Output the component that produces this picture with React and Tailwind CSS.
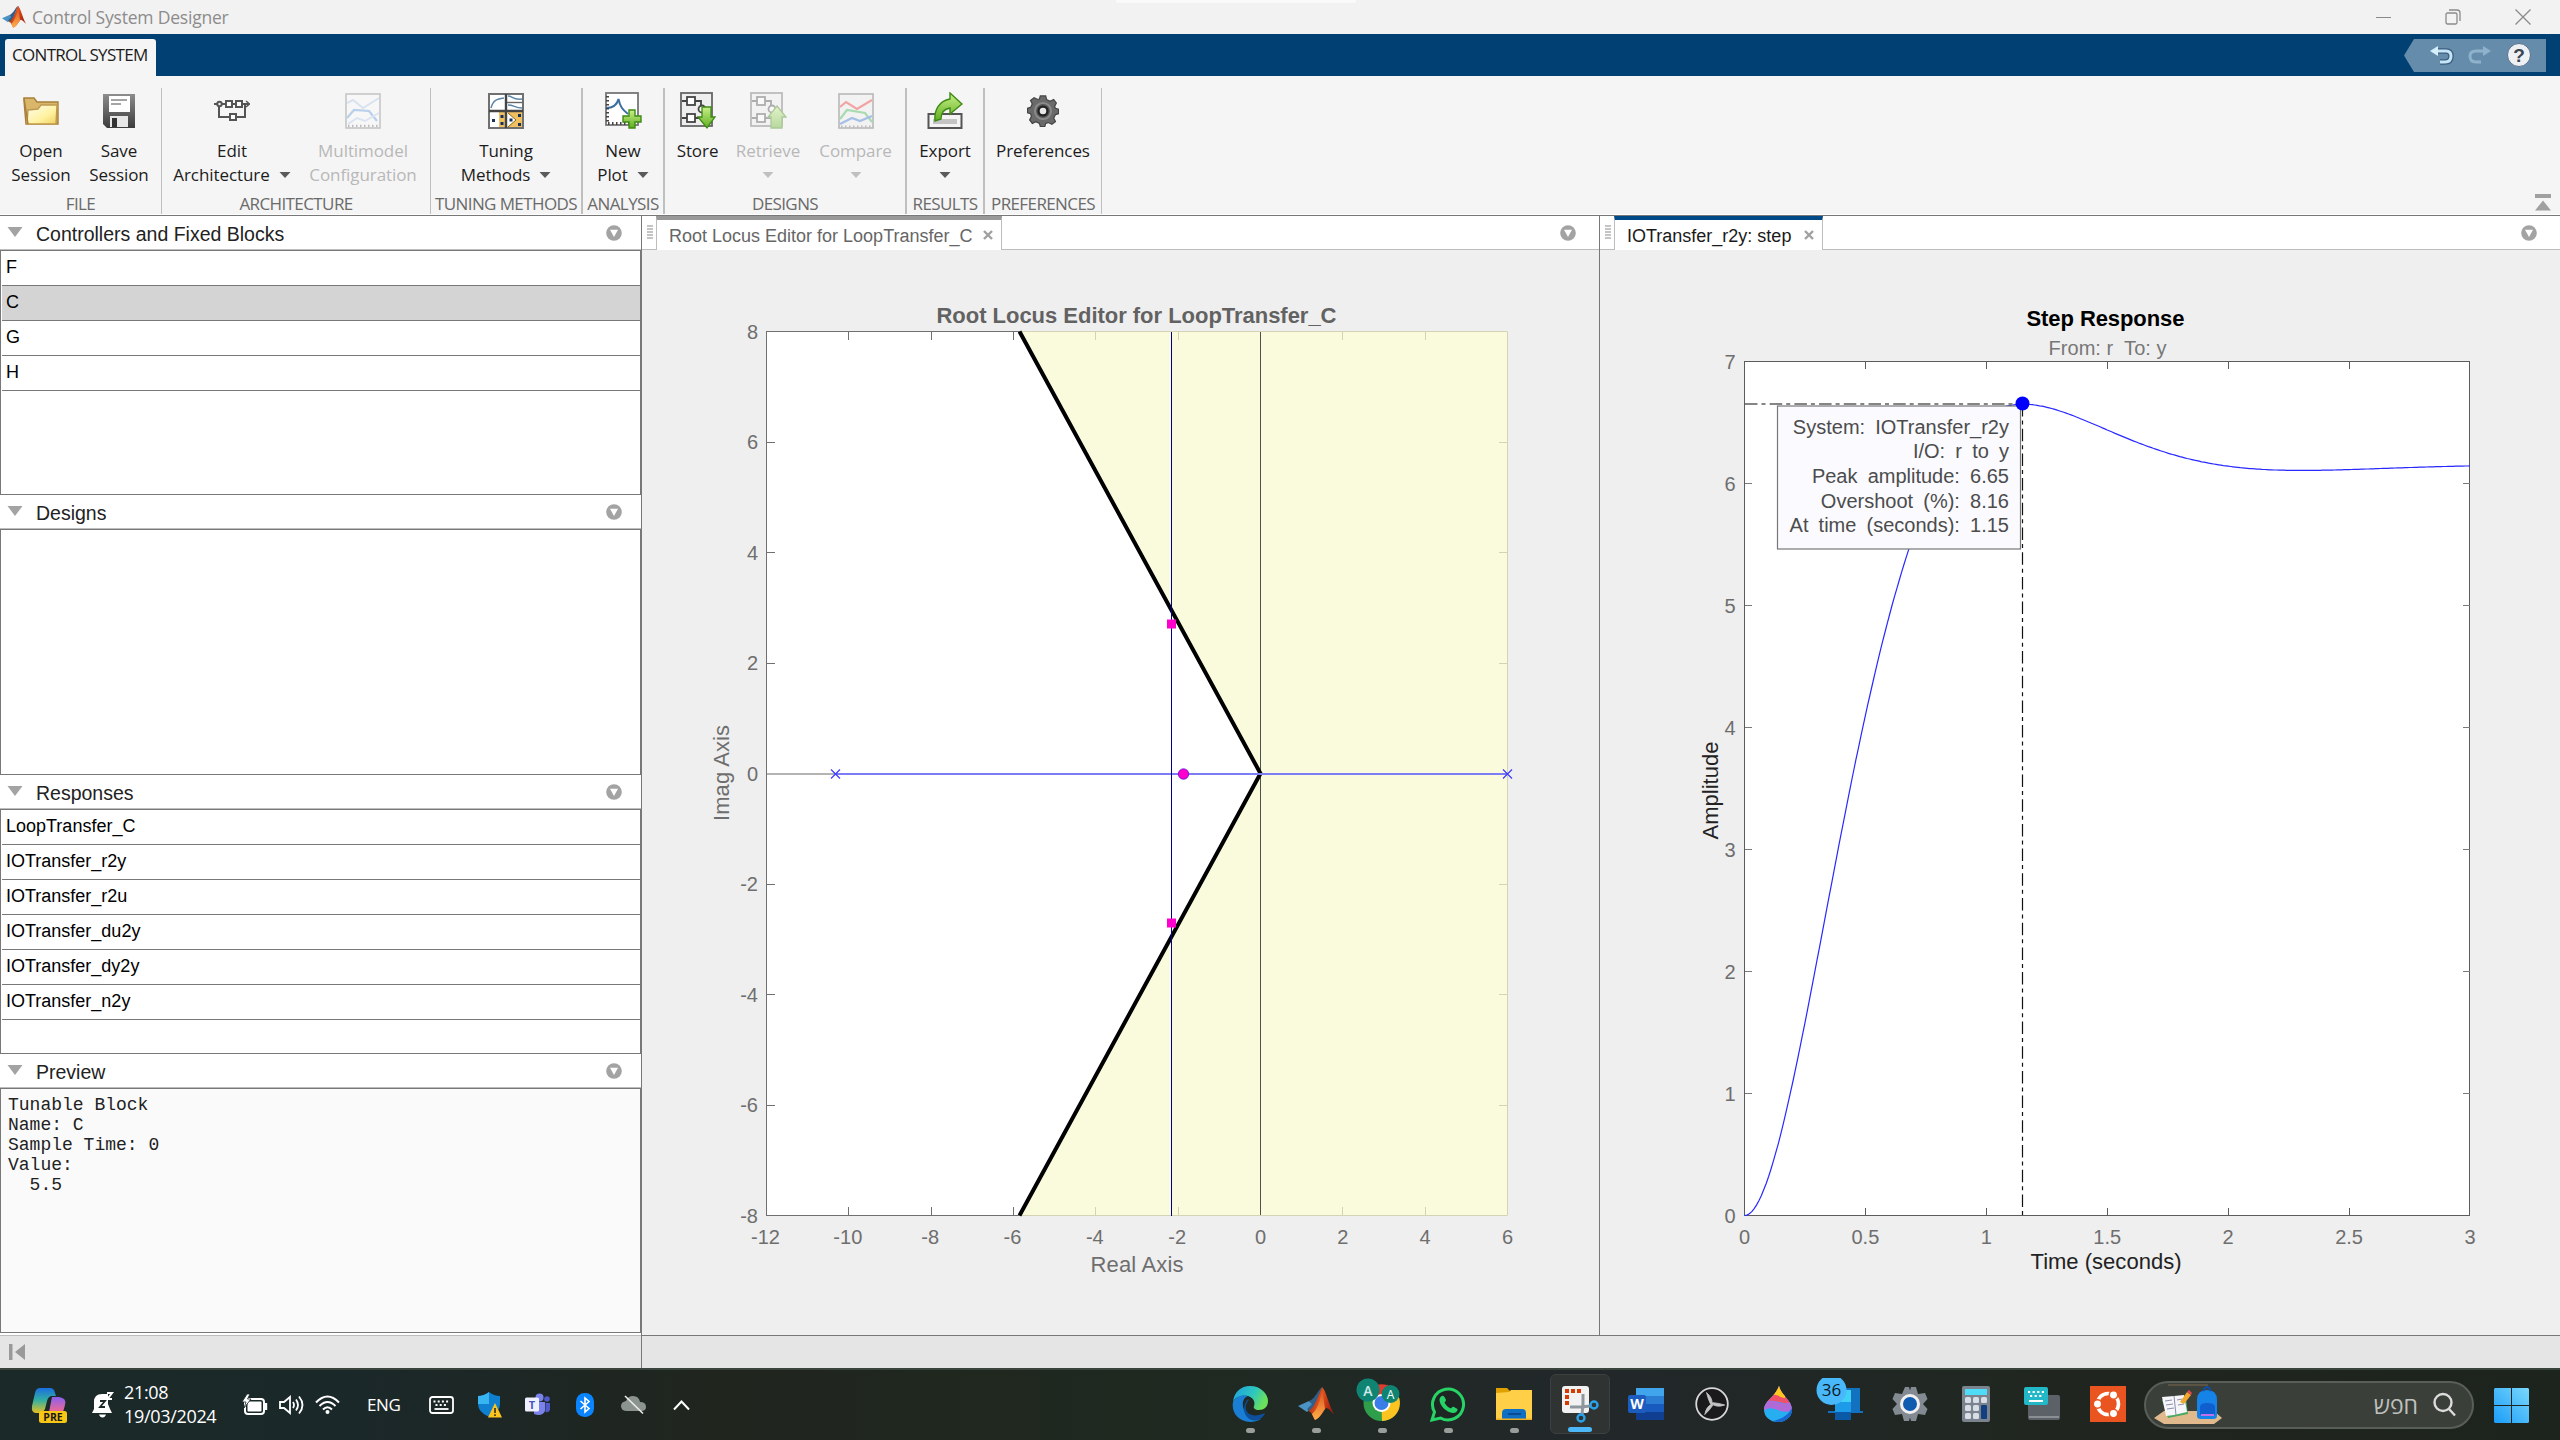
import React from "react";

/* ---------- shared bits ---------- */

const Caret = ({ dim }) => (
  <svg width="12" height="8" viewBox="0 0 12 8" className="shrink-0">
    <path d="M0.5 1H11.5L6 7Z" fill={dim ? "#c0c0c0" : "#5a5a5a"} />
  </svg>
);

const PanelMenu = () => (
  <svg width="16" height="16" viewBox="0 0 16 16" className="shrink-0">
    <circle cx="8" cy="8" r="7.8" fill="#a3a3a3" />
    <path d="M4 4.8H12L8 12Z" fill="#fff" />
  </svg>
);

const Grip = () => (
  <svg width="6" height="15" viewBox="0 0 6 15" className="shrink-0">
    {[0, 3, 6, 9, 12].map((y) => (
      <rect key={y} x="0" y={y} width="6" height="2" fill="#c4c4c4" />
    ))}
  </svg>
);

const CloseX = () => (
  <svg width="10" height="10" viewBox="0 0 10 10" className="shrink-0">
    <path d="M1 1L9 9M9 1L1 9" stroke="#a0a0a0" strokeWidth="2.4" />
  </svg>
);

const MatlabLogo = ({ size }) => (
  <svg width={size} height={size} viewBox="0 0 36 36">
    <defs>
      <linearGradient id="mlRed" x1="0" y1="0" x2="1" y2="0.4">
        <stop offset="0" stopColor="#7a1f12" />
        <stop offset="0.55" stopColor="#e2521d" />
        <stop offset="1" stopColor="#a3200f" />
      </linearGradient>
      <linearGradient id="mlOr" x1="0" y1="0" x2="0" y2="1">
        <stop offset="0" stopColor="#d84a1b" />
        <stop offset="1" stopColor="#ffb04a" />
      </linearGradient>
    </defs>
    <path d="M0 20L11 15L16 19L9 26Z" fill="#4b93c4" />
    <path d="M11 15C17 13 20 4 24 1L17 20L12 26L9 23L14 18Z" fill="#2f5f8a" />
    <path d="M24 1C20 10 17 22 10 25C14 25 15 32 17 34C22 32 25 25 28 22C31 22 33 26 36 28C31 20 28 4 24 1Z" fill="url(#mlRed)" />
    <path d="M24 2C23 14 19 24 14 28L17 34C22 32 24 27 27 23Z" fill="url(#mlOr)" />
  </svg>
);

/* ---------- toolstrip icons ---------- */

const OpenIcon = () => (
  <svg width="36" height="36" viewBox="0 0 36 36">
    <defs>
      <linearGradient id="fold" x1="0" y1="0" x2="1" y2="1">
        <stop offset="0" stopColor="#fffdf0" />
        <stop offset="0.6" stopColor="#fff2a0" />
        <stop offset="1" stopColor="#f0d060" />
      </linearGradient>
    </defs>
    <path d="M1 5H11L14 9H35V31H3L1 8Z" fill="#d9b66a" stroke="#a8803a" strokeWidth="1.4" />
    <path d="M4 31L5 17L15 16L18 12H34L33 31Z" fill="url(#fold)" stroke="#c09a50" strokeWidth="1.4" />
    <path d="M1 5L5 31" stroke="#a8803a" strokeWidth="1.4" />
  </svg>
);

const SaveIcon = () => (
  <svg width="36" height="36" viewBox="0 0 36 36">
    <defs>
      <linearGradient id="sv" x1="0" y1="0" x2="0" y2="1">
        <stop offset="0" stopColor="#8d8d8d" />
        <stop offset="1" stopColor="#3c3c3c" />
      </linearGradient>
    </defs>
    <path d="M2 1H34V35H6L2 31Z" fill="url(#sv)" />
    <rect x="8" y="3" width="21" height="16" fill="#fff" />
    <path d="M10 7H26M10 11H20" stroke="#888" strokeWidth="1.4" />
    <rect x="9" y="23" width="18" height="11" fill="#e8e8e8" />
    <rect x="11" y="25" width="5" height="9" fill="#333" />
  </svg>
);

const ArchIcon = () => (
  <svg width="36" height="36" viewBox="0 0 36 36" fill="none" stroke="#555" strokeWidth="2">
    <path d="M0 11H4M8 11H12M18 11H22M28 11H35M5 13V24H16M22 24H31V11" />
    <circle cx="5.5" cy="11" r="2.2" />
    <rect x="12" y="8" width="6" height="6" fill="#fff" />
    <rect x="22" y="8" width="6" height="6" fill="#fff" />
    <rect x="16" y="21" width="6" height="6" fill="#fff" />
    <path d="M32 8L35.5 11L32 14" strokeWidth="1.4" />
  </svg>
);

const MultiIcon = () => (
  <svg width="36" height="36" viewBox="0 0 36 36" fill="none">
    <rect x="1" y="1" width="34" height="34" fill="#f7f7f7" stroke="#c6c6c6" strokeWidth="1.6" />
    <path d="M2 10L8 7L18 15L34 5" stroke="#d9e2f0" strokeWidth="2" />
    <path d="M2 25L9 17L24 18L32 28" stroke="#b8d0ea" strokeWidth="2.2" />
    <path d="M3 31L12 25L20 28L34 20" stroke="#dbe4f2" strokeWidth="2" />
    <path d="M3 33H33" stroke="#bdbdbd" strokeWidth="2.5" strokeDasharray="1.5 2.5" />
  </svg>
);

const TuningIcon = () => (
  <svg width="36" height="36" viewBox="0 0 36 36" fill="none">
    <rect x="1" y="1" width="34" height="34" fill="#fff" stroke="#707070" strokeWidth="2" />
    <rect x="11" y="19" width="6" height="15" fill="#f0c060" />
    <path d="M19 19H34V34H19L28 27Z" fill="#f0c060" />
    <path d="M18 1V35M1 18H35" stroke="#444" strokeWidth="2.4" />
    <path d="M19 9.5H35" stroke="#666" strokeWidth="1.4" />
    <path d="M3 15C5 7 9 6 16 5M20 3C25 3 24 7 34 6M20 12C26 12 27 15 34 15" stroke="#5b86a8" strokeWidth="1.5" />
    <path d="M20 20L28 27L20 34" stroke="#8a6a20" strokeWidth="1" />
    <path d="M4 26h3v3H4zM12.5 22h3v3h-3zM12.5 29h3v3h-3zM21.5 25.500h3v3h-3zM30 21h3v3h-3zM30 30h3v3h-3z" fill="#16325c" />
  </svg>
);

const GreenGrad = () => (
  <defs>
    <linearGradient id="grn" x1="0" y1="0" x2="0" y2="1">
      <stop offset="0" stopColor="#c8f088" />
      <stop offset="1" stopColor="#5fae20" />
    </linearGradient>
  </defs>
);

const NewPlotIcon = () => (
  <svg width="38" height="38" viewBox="0 0 38 38" fill="none">
    <GreenGrad />
    <rect x="2" y="1" width="32" height="32" fill="#fff" stroke="#777" strokeWidth="1.8" />
    <path d="M2 16C9 16 13 13 14.500 7C16 15 19 18 24 22" stroke="#3b6ea0" strokeWidth="2" />
    <path d="M4 31.500H32" stroke="#444" strokeWidth="3" strokeDasharray="1.500 2.500" />
    <path d="M3.500 4V32" stroke="#444" strokeWidth="3" strokeDasharray="1.500 2.500" />
    <path d="M25 18h6v6h6v6h-6v6h-6v-6h-6v-6h6z" fill="url(#grn)" stroke="#3f8a14" strokeWidth="1.4" />
  </svg>
);

const BlocksIcon = ({ up }) => (
  <svg width="38" height="38" viewBox="0 0 38 38" fill="none" opacity={up ? 0.4 : 1}>
    <GreenGrad />
    <rect x="2" y="1" width="31" height="33" fill="#eee" stroke="#666" strokeWidth="1.8" />
    <path d="M3 9H8M16 9H22V14M3 26H8M16 26H24" stroke="#444" strokeWidth="1.8" />
    <rect x="8" y="5" width="8" height="8" fill="#fff" stroke="#444" strokeWidth="1.8" />
    <rect x="8" y="22" width="8" height="8" fill="#fff" stroke="#444" strokeWidth="1.8" />
    <circle cx="23" cy="17" r="3.500" stroke="#444" strokeWidth="1.800" fill="#fff" />
    {up ? (
      <path d="M28 14L37 25H33V36H22V25H19Z" fill="url(#grn)" stroke="#3f8a14" strokeWidth="1.3" />
    ) : (
      <path d="M23 15H32V25H36L28 36L19 25H23Z" fill="url(#grn)" stroke="#3f8a14" strokeWidth="1.3" />
    )}
  </svg>
);

const CompareIcon = () => (
  <svg width="36" height="36" viewBox="0 0 36 36" fill="none">
    <rect x="1" y="1" width="34" height="34" fill="#f2f2f2" stroke="#b8b8b8" strokeWidth="1.6" />
    <path d="M2 14L8 9L19 16L34 7" stroke="#f2a3a3" strokeWidth="2.2" />
    <path d="M2 26L9 17L27 20L34 29" stroke="#a8dcb0" strokeWidth="2.2" />
    <path d="M2 31L14 25L22 28L34 23" stroke="#a5bfe6" strokeWidth="2.2" />
    <path d="M3 33.500H33" stroke="#bdbdbd" strokeWidth="2" strokeDasharray="1.5 2.5" />
  </svg>
);

const ExportIcon = () => (
  <svg width="36" height="38" viewBox="0 0 36 38" fill="none">
    <GreenGrad />
    <path d="M1.500 22H34.500V36H1.500Z" fill="#f4f4f4" stroke="#555" strokeWidth="2" />
    <path d="M6 27H30V32H6Z" fill="#c4c4c4" />
    <path d="M8 29C7 18 12 9 23 7V1L35 12L23 22V16C17 17 14 21 14 27Z" fill="url(#grn)" stroke="#3f8a14" strokeWidth="1.4" />
  </svg>
);

const GEAR =
  "M15 1H21L22 5L26 7L30 5L33 9L31 13L32 15L35.500 16V21L32 22L30 26L32 30L28 33L24 31L21 32L20 35.500H15L14 32L10 30L6 32L3 28L5 24L4 21L0.500 20V15L4 14L6 10L4 6L8 3L12 5L14 4.500Z";

const PrefsIcon = () => (
  <svg width="32" height="32" viewBox="0 0 36 36">
    <path d={GEAR} fill="#6a6a6a" stroke="#444" strokeWidth="1.4" />
    <circle cx="18" cy="18" r="9" fill="#555" stroke="#8a8a8a" strokeWidth="2.4" />
    <circle cx="18" cy="18" r="5" fill="#e8e8e8" stroke="#222" strokeWidth="2.6" />
  </svg>
);

/* ---------- toolstrip ---------- */

const Tool = ({ w, icon, a, b, caret, dim }) => (
  <div className={`flex flex-col items-center ${w} ${dim ? "text-[#b8b8b8]" : "text-[#1c1c1c]"}`}>
    <div className="flex h-[38px] items-center justify-center">{icon}</div>
    <div className="mt-[9px] h-6 leading-6">{a}</div>
    <div className="flex h-6 items-center gap-[9px] leading-6">
      {b}
      {caret && <Caret dim={dim} />}
    </div>
  </div>
);

const Group = ({ w, label, children, sep = "border-r" }) => (
  <div className={`flex h-[126px] shrink-0 flex-col ${sep} border-[#bfbfbf] ${w}`}>
    <div className="flex pt-[4px]">{children}</div>
    <div className="mt-[7px] h-5 whitespace-nowrap text-center leading-5 tracking-[-0.6px] text-[#6a6a6a]">{label}</div>
  </div>
);

const Toolstrip = () => (
  <div className="flex h-[139px] border-b border-white bg-[#f5f5f5] pt-[12px] font-['Open_Sans',sans-serif] text-[17px] tracking-[-0.08px] whitespace-nowrap">
    <Group w="w-[162px]" label="FILE">
      <Tool w="w-[82px]" icon={<OpenIcon />} a="Open" b="Session" />
      <Tool w="w-[74px]" icon={<SaveIcon />} a="Save" b="Session" />
    </Group>
    <Group w="w-[269px]" label="ARCHITECTURE">
      <Tool w="w-[140px]" icon={<ArchIcon />} a="Edit" b="Architecture" caret />
      <Tool w="w-[122px]" icon={<MultiIcon />} a="Multimodel" b="Configuration" dim />
    </Group>
    <Group w="w-[152px]" label="TUNING METHODS" sep="border-r-2">
      <Tool w="w-[151px]" icon={<TuningIcon />} a="Tuning" b="Methods" caret />
    </Group>
    <Group w="w-[82px]" label="ANALYSIS" sep="border-r-2">
      <Tool w="w-[80px]" icon={<NewPlotIcon />} a="New" b="Plot" caret />
    </Group>
    <Group w="w-[242px]" label="DESIGNS" sep="border-r-2">
      <Tool w="w-[65px]" icon={<BlocksIcon />} a="Store" />
      <Tool w="w-[76px]" icon={<BlocksIcon up />} a="Retrieve" caret dim />
      <Tool w="w-[99px]" icon={<CompareIcon />} a="Compare" caret dim />
    </Group>
    <Group w="w-[78px]" label="RESULTS" sep="border-r-2">
      <Tool w="w-[76px]" icon={<ExportIcon />} a="Export" caret />
    </Group>
    <Group w="w-[117px]" label="PREFERENCES">
      <Tool w="w-[116px]" icon={<PrefsIcon />} a="Preferences" />
    </Group>
    <div className="flex flex-1 items-end justify-end pr-[9px] pb-[3px]">
      <svg width="16" height="17" viewBox="0 0 16 17">
        <path d="M0 0H16V4H0ZM8 6.500L16 16.500H0Z" fill="#a0a0a0" />
      </svg>
    </div>
  </div>
);

/* ---------- left dock ---------- */

const Section = ({ title, children, box = "h-[245px] bg-white" }) => (
  <section className="flex flex-col">
    <header className="flex h-[33px] items-center bg-white pl-[7px] pr-[19px]">
      <svg width="16" height="10" viewBox="0 0 16 10" className="mb-[1px]">
        <path d="M0.500 0H15.500L8 10Z" fill="#a3a3a3" />
      </svg>
      <span className="ml-[13px] flex-1 pt-[3px] text-[19.5px] leading-6 text-[#222]">{title}</span>
      <PanelMenu />
    </header>
    <div className="h-px bg-[#bdbdbd]" />
    <div className={`w-[641px] border border-[#787878] ${box}`}>{children}</div>
  </section>
);

const Row = ({ children, selected }) => (
  <div className={`ml-px h-[35px] border-b border-[#787878] pl-[4px] text-[18px] leading-[33px] text-black ${selected ? "bg-[#d4d4d4]" : ""}`}>
    {children}
  </div>
);

const LeftDock = () => (
  <aside className="flex w-[642px] shrink-0 flex-col border-r border-[#787878] bg-white">
    <Section title="Controllers and Fixed Blocks">
      <Row>F</Row>
      <Row selected>C</Row>
      <Row>G</Row>
      <Row>H</Row>
    </Section>
    <Section title="Designs" box="h-[246px] bg-white" />
    <Section title="Responses">
      {["LoopTransfer_C", "IOTransfer_r2y", "IOTransfer_r2u", "IOTransfer_du2y", "IOTransfer_dy2y", "IOTransfer_n2y"].map((r) => (
        <Row key={r}>{r}</Row>
      ))}
    </Section>
    <Section title="Preview" box="h-[245px] bg-[#fafafa]">
      <pre className="pt-[6px] pl-[7px] font-['Liberation_Mono',monospace] text-[18px] leading-5 text-[#222]">
        {"Tunable Block\nName: C\nSample Time: 0\nValue:\n  5.5"}
      </pre>
    </Section>
    <div className="mt-[2px] flex flex-1 items-center border-t border-[#bdbdbd] bg-[#e5e5e5] pl-[9px]">
      <svg width="17" height="16" viewBox="0 0 17 16">
        <path d="M0 0H3.500V16H0ZM16 0V16L6 8Z" fill="#999" />
      </svg>
    </div>
  </aside>
);

/* ---------- charts ---------- */

const Txt = ({ x, y, len, size = 20, anchor = "middle", fill = "#6e6e6e", bold, rotate, children }) => (
  <text
    x={x}
    y={y}
    fontSize={size}
    fontWeight={bold ? 700 : 400}
    textAnchor={anchor}
    fill={fill}
    textLength={len}
    transform={rotate ? `rotate(-90 ${x} ${y})` : undefined}
  >
    {children}
  </text>
);

const RootLocus = () => {
  const X = (v) => 1260.5 + v * 41.17;
  const Y = (v) => 773.5 - v * 55.25;
  const xs = [-12, -10, -8, -6, -4, -2, 0, 2, 4, 6];
  const ys = [8, 6, 4, 2, 0, -2, -4, -6, -8];
  const edge = "#707070";
  const soft = "#d4d4b4";
  return (
    <svg width="957" height="1085" viewBox="642 250 957 1085" className="block shrink-0 font-['Liberation_Sans',sans-serif]">
      <rect x="766.5" y="331.5" width="741" height="884" fill="#fff" />
      <path d="M766.5 331.5H1020M766.5 1215.5H1020M766.5 331V1216" stroke={edge} fill="none" />
      <path d="M1019.500 331.500L1260.500 773.500L1019.500 1215.500H1507.500V331.500Z" fill="#fafadc" />
      <path d="M1020 331.500H1507.500V1215.500H1020" stroke={soft} fill="none" />
      {xs.slice(1, -1).map((v) => {
        const x = Math.floor(X(v)) + 0.5;
        return <path key={v} d={`M${x} 332V340M${x} 1215V1207`} stroke={v < -5.8 ? edge : soft} />;
      })}
      {ys.slice(1, -1).map((v) => {
        const y = Math.floor(Y(v)) + 0.5;
        return (
          <g key={v}>
            <path d={`M767 ${y}H775`} stroke={edge} />
            <path d={`M1507 ${y}H1499`} stroke={soft} />
          </g>
        );
      })}
      <path d="M767 774H835" stroke="#b4b4b4" strokeWidth="2" />
      <path d="M1260.500 332V1215" stroke="#505050" />
      <path d="M1019.500 331.500L1260.500 773.500L1019.500 1215.500" stroke="#000" strokeWidth="4" fill="none" />
      <path d="M835 774H1507" stroke="#7c7cf4" strokeWidth="2" />
      <path d="M1171.500 332V1216" stroke="#00008c" />
      <path d="M831 769.500L840 778.500M840 769.500L831 778.500M1503 769.500L1512 778.500M1512 769.500L1503 778.500" stroke="#3c3cff" strokeWidth="1.2" />
      <rect x="1167" y="619.500" width="9" height="9" fill="#ff00cc" />
      <rect x="1167" y="918.500" width="9" height="9" fill="#ff00cc" />
      <circle cx="1183.500" cy="774" r="5.200" fill="#ff00cc" stroke="#5a10e0" strokeWidth="0.8" />
      <Txt x={1136.500} y={323} size={22} len={400} bold fill="#626262">Root Locus Editor for LoopTransfer_C</Txt>
      {xs.map((v) => (
        <Txt key={v} x={X(v) - (v < 0 ? 1 : 0)} y={1244}>{v}</Txt>
      ))}
      {ys.map((v) => (
        <Txt key={v} x={758} y={Y(v) + 7} anchor="end">{v}</Txt>
      ))}
      <Txt x={1137} y={1272} size={22} len={93}>Real Axis</Txt>
      <Txt x={729} y={773} size={22} len={96} rotate>Imag Axis</Txt>
    </svg>
  );
};

const StepPlot = () => {
  const X = (t) => 1744.5 + t * 241.83;
  const Y = (v) => 1215.5 - v * 122;
  const w = Math.PI / 1.153;
  const a = -Math.log(0.0816) / 1.153;
  const pts = Array.from({ length: 301 }, (_, i) => {
    const t = i / 100;
    const y = 6.148 * (1 - Math.exp(-a * t) * (Math.cos(w * t) + (a / w) * Math.sin(w * t)));
    return `${X(t).toFixed(1)},${Y(y).toFixed(1)}`;
  }).join(" ");
  const xs = [0, 0.5, 1, 1.5, 2, 2.5, 3];
  const ys = [0, 1, 2, 3, 4, 5, 6, 7];
  const tip = [
    ["System: IOTransfer_r2y", 433.5],
    ["I/O: r to y", 458],
    ["Peak amplitude: 6.65", 482.5],
    ["Overshoot (%): 8.16", 507.5],
    ["At time (seconds): 1.15", 532],
  ];
  return (
    <svg width="960" height="1085" viewBox="1600 250 960 1085" className="block shrink-0 font-['Liberation_Sans',sans-serif]">
      <rect x="1744.500" y="361.500" width="725" height="854" fill="#fff" stroke="#5c5c5c" />
      {xs.slice(1, -1).map((v) => {
        const x = Math.floor(X(v)) + 0.5;
        return <path key={v} d={`M${x} 362V369M${x} 1215V1208`} stroke="#5c5c5c" />;
      })}
      {ys.slice(1, -1).map((v) => (
        <path key={v} d={`M1745 ${Y(v)}H1752M2470 ${Y(v)}H2463`} stroke="#7a7a7a" />
      ))}
      <polyline points={pts} fill="none" stroke="#2828ff" strokeWidth="1.200" />
      <path d="M1745 404H2022" stroke="#858585" strokeWidth="2" strokeDasharray="12.500 4 4 4.200" />
      <path d="M2022.500 404V1215" stroke="#111" strokeWidth="1.200" strokeDasharray="12.500 4 4 4.200" />
      <rect x="1777.500" y="406" width="243" height="143" fill="#fafaff" stroke="#777" strokeWidth="1.200" />
      <circle cx="2022.500" cy="403.500" r="7" fill="#0000ff" />
      {tip.map(([s, y]) => (
        <text key={y} x="2009" y={y} fontSize="20" textAnchor="end" fill="#4c4c4c" className="[word-spacing:4.6px]">{s}</text>
      ))}
      <Txt x={2105.500} y={326} size={22} len={158} bold fill="#000">Step Response</Txt>
      <text x="2107.500" y="354.500" fontSize="20" textAnchor="middle" fill="#777" textLength="118">{"From: r\u00a0 To: y"}</text>
      {xs.map((v) => (
        <Txt key={v} x={X(v)} y={1244}>{v}</Txt>
      ))}
      {ys.map((v) => (
        <Txt key={v} x={1735.500} y={Y(v) + 7} anchor="end">{v}</Txt>
      ))}
      <Txt x={2106} y={1269} size={22} len={151} fill="#222">Time (seconds)</Txt>
      <Txt x={1718} y={790.500} size={22} len={98} fill="#222" rotate>Amplitude</Txt>
    </svg>
  );
};

const Doc = ({ w, tabW, title, active, children, menuPad }) => (
  <div className={`flex flex-col bg-[#efefef] ${w}`}>
    <div className="flex h-[34px]">
      <div className="flex w-[14px] shrink-0 items-center border-b border-[#bdbdbd] bg-white pl-[5px]">
        <Grip />
      </div>
      <div className={`flex shrink-0 items-center justify-between border-x border-t-4 border-x-[#bdbdbd] bg-white pr-[8px] pl-[12px] ${tabW} ${active ? "border-t-[#004b87] text-[#1a1a1a]" : "border-t-[#999] text-[#666]"}`}>
        <span className="whitespace-nowrap pt-px text-[18px] leading-6">{title}</span>
        <CloseX />
      </div>
      <div className={`flex flex-1 items-center justify-end border-b border-[#bdbdbd] bg-white ${menuPad}`}>
        <PanelMenu />
      </div>
    </div>
    {children}
  </div>
);

/* ---------- taskbar icons ---------- */

const Edge = () => (
  <svg width="36" height="36" viewBox="0 0 36 36">
    <defs>
      <linearGradient id="eg" x1="0" y1="0" x2="1" y2="0.4">
        <stop offset="0" stopColor="#1f9fe0" />
        <stop offset="0.6" stopColor="#2cc6c0" />
        <stop offset="1" stopColor="#6be05a" />
      </linearGradient>
    </defs>
    <path d="M1 16C2 6 9 0 18 0C29 0 36 8 36 15C36 21 32 24 27 24C23 24 21 22 22 20C23 18 23 12 16 10C9 9 3 11 1 16Z" fill="url(#eg)" />
    <path d="M1 16C4 10 11 8 16 10C12 11 9 17 12 24C15 32 24 34 29 33C26 35 22 36 18 36C7 36 -1 27 1 16Z" fill="#1a7fd4" />
    <path d="M14 19C12 27 20 33 33 27C31 32 27 34 24 34.500C13 35 8 22 16 13C18 13 15 16 14 19Z" fill="#0e4f9c" />
  </svg>
);

const Chrome = () => (
  <svg width="44" height="44" viewBox="0 0 44 44">
    <circle cx="25.500" cy="25" r="18" fill="#2e9e4a" />
    <path d="M25.500 25L10 15A18 18 0 0 1 41 15Z" fill="#e23b2e" />
    <path d="M25.500 25L41.500 16A18 18 0 0 1 26 43Z" fill="#fcc421" />
    <circle cx="25.500" cy="25" r="9" fill="#fff" />
    <circle cx="25.500" cy="25" r="7" fill="#3b7de8" />
    <circle cx="12" cy="12" r="11.500" fill="#0f8473" />
    <circle cx="34.500" cy="16" r="9" fill="#0f8473" />
    <text x="12" y="17.500" fontSize="14" fontWeight="600" textAnchor="middle" fill="#cfeae6">A</text>
    <text x="34.500" y="20.500" fontSize="12" textAnchor="middle" fill="#fff">A</text>
  </svg>
);

const WhatsApp = () => (
  <svg width="36" height="36" viewBox="0 0 36 36">
    <path d="M2 34L4.500 26A15.500 15.500 0 1 1 10.500 32Z" fill="#1d2622" stroke="#27d366" strokeWidth="3" />
    <path d="M12 10C14 9 15 12 16 14C15.500 15.500 15 16 14.500 16.500C16 19.500 18 21.500 21 22.500C22 21.500 22.500 20.500 23.500 20.800L27.500 23C27.500 26 25 27 23 27C16 26 10 20 9.500 14C9.500 12 10.500 10.500 12 10Z" fill="#27d366" />
  </svg>
);

const Folder = () => (
  <svg width="36" height="34" viewBox="0 0 36 34">
    <path d="M0 1H11L15 5V10H0Z" fill="#e0a000" />
    <path d="M0 6L13 5L15 3H36V32H0Z" fill="#ffcf48" />
    <path d="M6 32V26Q6 22 10 22H26Q30 22 30 26V32Z" fill="#0f6fc4" />
    <path d="M12 27H25" stroke="#0a4a90" strokeWidth="2" />
    <path d="M0 31.500H36V33H0Z" fill="#f0b020" />
  </svg>
);

const Snip = () => (
  <svg width="38" height="38" viewBox="0 0 38 38" fill="none">
    <rect x="1" y="1" width="27" height="27" rx="3" fill="#f2f2f2" />
    <path d="M6 20V6H20" stroke="#d83b01" strokeWidth="4" strokeDasharray="4 2" />
    <path d="M22 9V21M9 22H24M22 18L21 30M19 22L30 21" stroke="#8f979e" strokeWidth="3" />
    <circle cx="20" cy="33" r="3.500" stroke="#2aa2e8" strokeWidth="2.400" />
    <circle cx="33" cy="20" r="3.500" stroke="#2aa2e8" strokeWidth="2.400" />
  </svg>
);

const Word = () => (
  <svg width="36" height="34" viewBox="0 0 36 34">
    <path d="M8 1H36V9H8Z" fill="#41a5ee" />
    <path d="M8 9H36V17H8Z" fill="#2b7cd3" />
    <path d="M8 17H36V25H8Z" fill="#185abd" />
    <path d="M8 25H36V33H8Z" fill="#103f91" />
    <rect x="0" y="8" width="18" height="18" rx="2" fill="#1b5cbe" />
    <text x="9" y="22" fontSize="14" fontWeight="700" textAnchor="middle" fill="#fff">W</text>
  </svg>
);

const Obs = () => (
  <svg width="34" height="34" viewBox="0 0 34 34" fill="none">
    <circle cx="17" cy="17" r="15.800" fill="#1a1a1d" stroke="#d8d8d8" strokeWidth="1.800" />
    {[0, 120, 240].map((r) => (
      <path key={r} d="M17 17.500Q18 11 11.500 5.500Q13 12 15.500 17Z" fill="#c4c4c4" stroke="#c4c4c4" strokeWidth="0.800" transform={`rotate(${r} 17 17)`} />
    ))}
  </svg>
);

const Paint = () => (
  <svg width="30" height="36" viewBox="0 0 30 36">
    <clipPath id="drop"><path d="M16 0C18 9 29 14 29 24A14 12 0 0 1 1 24C1 15 12 11 16 0Z" /></clipPath>
    <g clipPath="url(#drop)">
      <rect width="30" height="36" fill="#27aef0" />
      <path d="M0 0H30V16C20 22 10 8 0 20Z" fill="#f0506a" />
      <path d="M10 0H22V12C18 12 14 8 10 9Z" fill="#ffc81e" />
      <path d="M0 18C10 8 18 24 30 14V23C18 32 12 16 0 25Z" fill="#b06ad8" />
      <path d="M4 36C20 34 26 28 30 20V36Z" fill="#1668d0" />
    </g>
  </svg>
);

const PhoneLink = () => (
  <svg width="48" height="44" viewBox="0 0 48 44">
    <path d="M26 10H44V33H47V35H12V33H26Z" fill="#1272c0" />
    <path d="M19 12H35V42H19Z" fill="#1e9be8" />
    <path d="M19 12H35V24H19Z" fill="#3fd0f6" />
    <path d="M19 34H35V42H19Z" fill="#0a5aa8" />
    <circle cx="15.500" cy="12" r="15" fill="#48b8fa" />
    <text x="15.500" y="18" fontSize="17" textAnchor="middle" fill="#0b1a26">36</text>
  </svg>
);

const Settings = () => (
  <svg width="36" height="36" viewBox="0 0 36 36">
    <path d="M13 1H17L18 4.500L19 1H24L26 8L33 7L35.500 13L31 18L35.500 23L33 29L26 28L24 35H19L18 31.500L17 35H12L10 28L3 29L0.500 23L5 18L0.500 13L3 7L10 8Z" fill="#838a92" />
    <circle cx="18" cy="18" r="8.500" fill="#0e5cb0" stroke="#f0f0f0" strokeWidth="3" />
  </svg>
);

const Calc = () => (
  <svg width="28" height="36" viewBox="0 0 28 36">
    <rect width="28" height="36" rx="2" fill="#7b848e" />
    <rect x="3" y="3" width="22" height="6" fill="#4fdcf8" />
    {[11, 19, 27].map((y) => [3, 11, 19].map((x) => (
      <rect key={`${x}-${y}`} x={x} y={y} width="6" height="6" rx="1.500" fill={x === 19 && y > 11 ? "#123f80" : "#d8dee6"} />
    )))}
    <rect x="19" y="19" width="6" height="14" rx="1.500" fill="#123f80" />
  </svg>
);

const InputApp = () => (
  <svg width="36" height="34" viewBox="0 0 36 34">
    <rect x="4" y="8" width="32" height="25" rx="2" fill="#5c6168" />
    <path d="M5 30H35" stroke="#9a9fa6" strokeWidth="1.500" />
    <rect x="0" y="0" width="24" height="18" rx="2" fill="#22b8c8" />
    <path d="M4 5H21M6 9H19" stroke="#fff" strokeWidth="2.200" strokeDasharray="2.200 2.400" />
    <path d="M5 14H19" stroke="#fff" strokeWidth="2" />
  </svg>
);

const Ubuntu = () => (
  <svg width="36" height="36" viewBox="0 0 36 36" fill="none">
    <rect width="36" height="36" fill="#e95420" />
    <circle cx="18" cy="18" r="10.500" stroke="#fff" strokeWidth="3.600" />
    {[[7.500, 18], [23.500, 9], [23.500, 27.500]].map(([x, y]) => (
      <circle key={y} cx={x} cy={y} r="4.200" fill="#fff" stroke="#e95420" strokeWidth="1.500" />
    ))}
  </svg>
);

const APPS = [
  [Edge, 1], [() => <MatlabLogo size={36} />, 1], [Chrome, 1, "-translate-x-[4px] -translate-y-[4px]"], [WhatsApp, 1], [Folder, 1], [Snip, 2], [Word, 0],
  [Obs, 0], [Paint, 0], [PhoneLink, 0, "-translate-x-[4px] -translate-y-[4px]"], [Settings, 0], [Calc, 0], [InputApp, 0], [Ubuntu, 0],
];

const Taskbar = () => (
  <footer className="flex h-[72px] items-center border-t-2 border-[#3a433c] bg-[linear-gradient(90deg,#1b2928_0%,#1b2829_14%,#20251e_28%,#1f2920_45%,#22282a_62%,#20261f_80%,#1d231d_100%)] font-['Open_Sans',sans-serif] text-white">
    <svg width="36" height="36" viewBox="0 0 36 36" className="ml-[31px]">
      <defs>
        <linearGradient id="cp1" x1="0" y1="0" x2="0" y2="1">
          <stop offset="0" stopColor="#1a6fe0" />
          <stop offset="0.500" stopColor="#35b0a0" />
          <stop offset="1" stopColor="#e8c020" />
        </linearGradient>
        <linearGradient id="cp2" x1="0" y1="0" x2="0" y2="1">
          <stop offset="0" stopColor="#8a60f0" />
          <stop offset="1" stopColor="#f06a90" />
        </linearGradient>
      </defs>
      <path d="M9 1H19Q23 1 24 6L25 9H20Q17 10 16 14L14 22Q12 26 8 26H5Q0 26 1 19L4 6Q5 1 9 1Z" fill="url(#cp1)" />
      <path d="M21 10H28Q36 11 34 18L32 25H18Z" fill="url(#cp2)" />
      <rect x="8" y="24" width="28" height="12" rx="2.500" fill="#f8c614" />
      <text x="22" y="34" fontSize="10.500" fontWeight="700" textAnchor="middle" fill="#1a1a1a">PRE</text>
    </svg>
    <svg width="22" height="26" viewBox="0 0 22 26" className="ml-[25px]">
      <path d="M2 10Q2 2 10 2H16V12L18 17L20 21H0L2 17ZM7 22.500H14Q13 25.500 10.500 25.500Q8 25.500 7 22.500Z" fill="#fff" />
      <path d="M8 9H13L8 15H13" stroke="#1b2928" strokeWidth="1.800" fill="none" />
      <path d="M15 1H20L15.500 7H20" stroke="#fff" strokeWidth="2" fill="none" />
    </svg>
    <div className="ml-[10px] w-[94px] whitespace-nowrap pb-[3px] text-[18px] leading-6 tracking-[-0.32px]">
      <div>21:08</div>
      <div>19/03/2024</div>
    </div>
    <svg width="26" height="22" viewBox="0 0 26 22" fill="none" className="ml-[24px]">
      <rect x="3" y="5" width="19" height="15" rx="3" stroke="#fff" strokeWidth="2" />
      <rect x="5.500" y="7.500" width="14" height="10" rx="1" fill="#fff" />
      <path d="M24 9V16" stroke="#fff" strokeWidth="2.400" />
      <path d="M5 0L0 8H4L2 14L9 5H5.500L8 0Z" fill="#fff" stroke="#1b2928" strokeWidth="0.800" />
    </svg>
    <svg width="25" height="20" viewBox="0 0 25 20" fill="none" stroke="#fff" strokeWidth="1.800" className="ml-[11px]">
      <path d="M1 7H5L11 2V18L5 13H1ZM14 7Q16 10 14 13M17 4.500Q21 10 17 15.500M20 1.500Q27 10 20 18.500" />
    </svg>
    <svg width="25" height="20" viewBox="0 0 25 20" fill="none" stroke="#fff" strokeWidth="2" className="ml-[11px]">
      <path d="M1 7.500Q12.500 -4.500 24 7.500M4.500 11Q12.500 3 20.500 11M8 14.500Q12.500 10 17 14.500" />
      <circle cx="12.500" cy="17" r="2" fill="#fff" stroke="none" />
    </svg>
    <div className="ml-[27px] w-[36px] pb-px text-[17px] tracking-[-0.4px]">ENG</div>
    <svg width="25" height="18" viewBox="0 0 25 18" fill="none" stroke="#fff" className="ml-[26px]">
      <rect x="1" y="1" width="23" height="16" rx="2.500" strokeWidth="1.800" />
      <path d="M4.500 5.500H21M6.500 9H19" strokeWidth="2" strokeDasharray="2 2.200" />
      <path d="M5.500 13H19.500" strokeWidth="1.800" />
    </svg>
    <svg width="24" height="26" viewBox="0 0 24 26" className="ml-[24px]">
      <path d="M11 0Q16 4 22 4V12Q22 20 11 25Q0 20 0 12V4Q6 4 11 0Z" fill="#0f7fd0" />
      <path d="M11 0V12H0V4Q6 4 11 0Z" fill="#38b4f0" />
      <path d="M17 11L24 25.500H10Z" fill="#fcc41c" />
      <path d="M17 16V21M17 22.300V24" stroke="#222" strokeWidth="1.500" />
    </svg>
    <svg width="25" height="24" viewBox="0 0 25 24" className="ml-[23px]">
      <circle cx="14.500" cy="4.500" r="4" fill="#7b83eb" />
      <circle cx="22" cy="6" r="2.800" fill="#5059c9" />
      <path d="M9 9H20V18Q17 24 9 21Z" fill="#7b83eb" />
      <path d="M20.500 10H25V17Q23.500 20 20.500 19Z" fill="#5059c9" />
      <rect y="4.500" width="14" height="14" rx="1.500" fill="#eef0ff" />
      <text x="7" y="15.500" fontSize="11" fontWeight="700" textAnchor="middle" fill="#4b53bc">T</text>
    </svg>
    <svg width="18" height="24" viewBox="0 0 18 24" className="ml-[26px]">
      <rect width="18" height="24" rx="8.500" fill="#0a84ff" />
      <path d="M4.500 8L13 15.500L9 19V5L13 8.500L4.500 16" stroke="#fff" strokeWidth="1.600" fill="none" />
    </svg>
    <svg width="25" height="20" viewBox="0 0 25 20" className="ml-[27px]">
      <path d="M6 16Q0 16 0 11Q0 7 5 6Q7 1 12 1Q18 1 19 7Q25 7 25 12Q25 16 20 16Z" fill="#8c9490" />
      <path d="M4 1L22 18.500" stroke="#eee" strokeWidth="1.600" />
    </svg>
    <svg width="17" height="11" viewBox="0 0 17 11" fill="none" className="ml-[27px]">
      <path d="M1 9.500L8.500 1.500L16 9.500" stroke="#fff" strokeWidth="2" />
    </svg>
    <div className="ml-[527px] flex h-full">
      {APPS.map(([Icon, state, shift = ""], i) => (
        <div key={i} className="flex h-full w-[66px] flex-col items-center pt-[4px]">
          <div className={`relative flex h-[60px] w-[60px] items-center justify-center rounded-md ${state === 2 ? "border border-[#3c413f] bg-[#2f3432]" : ""}`}>
            <div className={shift}><Icon /></div>
            {state > 0 && (
              <div className={`absolute bottom-[1px] h-[5px] rounded-full ${state === 2 ? "w-6 bg-[#4cb8f8]" : "w-[9px] bg-[#9a9e9b]"}`} />
            )}
          </div>
        </div>
      ))}
    </div>
    <div className="ml-[3px] flex h-[48px] w-[330px] items-center rounded-full border-2 border-[#5a5e58] bg-[#3b3f3a] pl-[8px]">
      <svg width="68" height="42" viewBox="0 0 68 42">
        <path d="M14 1H54" stroke="#7d6a4a" />
        <path d="M0 34L10 27H60L68 34L60 40H10Z" fill="#e0b98c" />
        <path d="M8 16L20 13L32 15L34 30L14 34Z" fill="#4aa860" />
        <path d="M8 13L20 12L30 11L33 28L20 31L12 32Z" fill="#f6f6fa" />
        <path d="M20 12L22 31M11 17L18 16M12 21L19 20M13 25L20 24M23 16L28 15M24 21L30 20" stroke="#8a8ea8" strokeWidth="1" />
        <path d="M26 18L33 8L37 11L30 20Z" fill="#f0a830" />
        <path d="M33 8L35 6L38 9L37 11Z" fill="#e04848" />
        <path d="M43 16Q43 6 53 6Q63 6 63 16V32Q63 35 59 35H47Q43 35 43 32Z" fill="#1583e8" />
        <path d="M46 23Q46 19 53 19Q61 19 61 23V31H46Z" fill="#0f5fd0" />
        <path d="M47 31H60" stroke="#c070e8" strokeWidth="2" />
        <path d="M49 7Q53 -1 57 7" stroke="#0d4fa8" strokeWidth="2" fill="none" />
      </svg>
      <div className="flex-1 text-[23px] leading-none text-[#bfc1be]" dir="rtl">
        <span className="block text-right">חפש</span>
      </div>
      <svg width="24" height="26" viewBox="0 0 24 26" fill="none" stroke="#dcdcdc" strokeWidth="2.400" className="mr-[15px] ml-[15px]">
        <circle cx="10" cy="10.500" r="8.500" />
        <path d="M16 17L22 23.500" />
      </svg>
    </div>
    <svg width="35" height="35" viewBox="0 0 35 35" className="ml-[20px]">
      <defs>
        <linearGradient id="win" x1="0" y1="1" x2="1" y2="0">
          <stop offset="0" stopColor="#1a9cf8" />
          <stop offset="1" stopColor="#7ad8fc" />
        </linearGradient>
      </defs>
      <path d="M1 0H17V17H0V1ZM18 0H34L35 1V17H18ZM0 18H17V35H1L0 34ZM18 18H35V34L34 35H18Z" fill="url(#win)" />
    </svg>
  </footer>
);

/* ---------- window ---------- */

const TitleBar = () => (
  <div className="flex h-[34px] items-center bg-[#f2f2f2] pl-[2px]">
    <MatlabLogo size={24} />
    <span className="ml-[6px] w-[300px] whitespace-nowrap font-['Open_Sans',sans-serif] text-[17.5px] leading-6 tracking-[-0.2px] text-[#8c8c8c]">Control System Designer</span>
    <div className="ml-[784px] h-[3px] w-[240px] self-start rounded-b-full bg-[#fafafa]" />
    <div className="flex flex-1 items-center justify-end gap-[54px] pr-[29px]">
      <svg width="15" height="15" viewBox="0 0 15 15"><path d="M0 7.500H15" stroke="#8a8a8a" /></svg>
      <svg width="16" height="16" viewBox="0 0 16 16" fill="none" stroke="#8a8a8a" strokeWidth="1.300">
        <rect x="1" y="4" width="11" height="11" rx="1.500" />
        <path d="M4 1H12Q15 1 15 4V12" />
      </svg>
      <svg width="16" height="16" viewBox="0 0 16 16"><path d="M0.500 0.500L15.500 15.500M15.500 0.500L0.500 15.500" stroke="#8a8a8a" strokeWidth="1.300" /></svg>
    </div>
  </div>
);

const Ribbon = () => (
  <div className="flex h-[42px] bg-[#004072]">
    <div className="mt-[5px] ml-[5px] flex w-[151px] items-center rounded-t-[3px] bg-[#f5f5f5] pb-[5px] pl-[7px] font-['Open_Sans',sans-serif] text-[17px] tracking-[-0.7px] whitespace-nowrap text-[#1c1c1c]">
      CONTROL SYSTEM
    </div>
    <svg width="142" height="33" viewBox="0 0 142 33" className="mt-[5px] mr-[14px] ml-auto" fill="none">
      <path d="M10 0H142V33H10L0 16.500Z" fill="#668cac" />
      <path d="M32 12H42Q47 12 47 17Q47 23 41 23H36" stroke="#3c5f80" strokeWidth="5.500" />
      <path d="M31 12H42Q47 12 47 17Q47 23 41 23H36" stroke="#c6e6f8" strokeWidth="3" />
      <path d="M26 12L34 7V17Z" fill="#d4effc" />
      <path d="M80 12H72Q66 12 66 17Q66 23 72 23H77" stroke="#8fb2cc" strokeWidth="3" />
      <path d="M87 12L79 7V17Z" fill="#8fb2cc" />
      <circle cx="115" cy="16" r="11.500" fill="#eef1f4" stroke="#58708a" strokeWidth="1" />
      <text x="115" y="23" fontSize="19" fontWeight="700" textAnchor="middle" fill="#3a4654">?</text>
    </svg>
  </div>
);

export default function App() {
  return (
    <div className="flex h-[1440px] w-[2560px] flex-col overflow-hidden bg-[#efefef] font-['Liberation_Sans',Arial,sans-serif]">
      <TitleBar />
      <Ribbon />
      <Toolstrip />
      <div className="h-px bg-[#787878]" />
      <div className="flex h-[1152px]">
        <LeftDock />
        <main className="flex flex-1 flex-col">
          <div className="flex">
            <Doc w="w-[957px]" tabW="w-[346px]" title="Root Locus Editor for LoopTransfer_C" menuPad="pr-[23px]">
              <RootLocus />
            </Doc>
            <div className="w-px bg-[#787878]" />
            <Doc w="w-[960px]" tabW="w-[209px]" title="IOTransfer_r2y: step" active menuPad="pr-[23px]">
              <StepPlot />
            </Doc>
          </div>
          <div className="flex-1 border-t border-[#787878] bg-[#e5e5e5]" />
        </main>
      </div>
      <Taskbar />
    </div>
  );
}
